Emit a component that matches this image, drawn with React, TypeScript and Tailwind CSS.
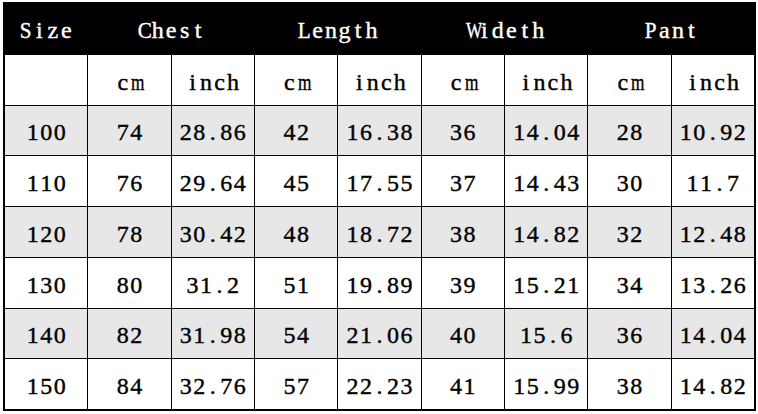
import React from "react";

const wide = new Set(["m", "W", "M", "w"]);
const mid = new Set(["C", "G", "D", "H", "N", "O", "P", "S", "L", "T"]);

const Mono = ({ text }: { text: string }) => (
  <span className="inline-flex font-['Liberation_Serif'] [-webkit-text-stroke-width:0.4px]">
    {text.split("").map((ch, i) => (
      <span
        key={i}
        className={
          wide.has(ch)
            ? "inline-block w-[13.5px] text-center scale-x-[0.72]"
            : mid.has(ch)
            ? "inline-block w-[13.5px] text-center scale-x-[0.88]"
            : "inline-block w-[13.5px] text-center"
        }
      >
        {ch}
      </span>
    ))}
  </span>
);

const rows = [
  ["100", "74", "28.86", "42", "16.38", "36", "14.04", "28", "10.92"],
  ["110", "76", "29.64", "45", "17.55", "37", "14.43", "30", "11.7"],
  ["120", "78", "30.42", "48", "18.72", "38", "14.82", "32", "12.48"],
  ["130", "80", "31.2", "51", "19.89", "39", "15.21", "34", "13.26"],
  ["140", "82", "31.98", "54", "21.06", "40", "15.6", "36", "14.04"],
  ["150", "84", "32.76", "57", "22.23", "41", "15.99", "38", "14.82"],
];

export default function App() {
  return (
    <div className="w-[758px] h-[414px] bg-white pt-[2px] pl-[3px]">
      <div className="w-[753px] h-[409px] border-2 border-black bg-black grid grid-cols-9 grid-rows-[repeat(8,1fr)] gap-px text-[24px] leading-none text-black">
        <div className="bg-black text-white flex items-center justify-center pt-[2px]">
          <Mono text="Size" />
        </div>
        <div className="col-span-2 bg-black text-white flex items-center justify-center pt-[2px]">
          <Mono text="Chest" />
        </div>
        <div className="col-span-2 bg-black text-white flex items-center justify-center pt-[2px]">
          <Mono text="Length" />
        </div>
        <div className="col-span-2 bg-black text-white flex items-center justify-center pt-[2px]">
          <Mono text="Wideth" />
        </div>
        <div className="col-span-2 bg-black text-white flex items-center justify-center pt-[2px]">
          <Mono text="Pant" />
        </div>

        <div className="bg-white" />
        {["cm", "inch", "cm", "inch", "cm", "inch", "cm", "inch"].map((t, i) => (
          <div key={i} className="bg-white flex items-center justify-center pt-[4px]">
            <Mono text={t} />
          </div>
        ))}

        {rows.map((r, ri) =>
          r.map((c, ci) => (
            <div
              key={`${ri}-${ci}`}
              className={`${ri % 2 === 0 ? "bg-[#e7e7e7]" : "bg-white"} flex items-center justify-center pt-[4px]`}
            >
              <Mono text={c} />
            </div>
          ))
        )}
      </div>
    </div>
  );
}
